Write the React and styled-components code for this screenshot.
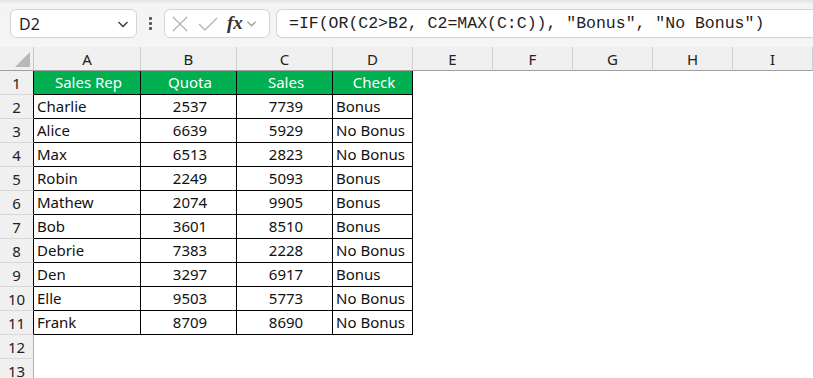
import React from "react";
import styled, { createGlobalStyle } from "styled-components";

const GlobalStyle = createGlobalStyle`
  html, body {
    margin: 0;
    padding: 0;
    background: #ffffff;
    overflow: hidden;
  }
  * {
    box-sizing: border-box;
  }
`;

const rows = [
  ["Charlie", 2537, 7739],
  ["Alice", 6639, 5929],
  ["Max", 6513, 2823],
  ["Robin", 2249, 5093],
  ["Mathew", 2074, 9905],
  ["Bob", 3601, 8510],
  ["Debrie", 7383, 2228],
  ["Den", 3297, 6917],
  ["Elle", 9503, 5773],
  ["Frank", 8709, 8690],
];

const letters = ["A", "B", "C", "D", "E", "F", "G", "H", "I"];

const Page = styled.div`
  width: 813px;
  height: 378px;
  overflow: hidden;
  font-family: "Noto Sans", "Liberation Sans", sans-serif;
`;

const Toolbar = styled.div`
  height: 47px;
  display: flex;
  align-items: flex-start;
  padding: 9px 0 0 10px;
  background: linear-gradient(#e4e4e4 0px, #f4f4f4 4px, #f5f5f5 100%);
`;

const Box = styled.div`
  height: 29px;
  background: #ffffff;
  border: 1px solid #d4d4d4;
  border-radius: 6px;
  display: flex;
  align-items: center;
`;

const NameBox = styled(Box)`
  width: 127px;
  padding: 0 7px 0 8px;
  justify-content: space-between;
  font-size: 16px;
  color: #1e1e1e;
`;

const Dots = styled.div`
  width: 27px;
  height: 29px;
  display: flex;
  flex-direction: column;
  align-items: center;
  justify-content: center;
  gap: 2px;
  span {
    width: 3px;
    height: 3px;
    background: #555;
    border-radius: 1px;
  }
`;

const FxBox = styled(Box)`
  width: 106px;
  padding: 0 4px 0 6px;
`;

const FxGlyph = styled.span`
  font-family: "Liberation Serif", "DejaVu Serif", serif;
  font-style: italic;
  font-weight: bold;
  font-size: 19px;
  color: #333;
  margin: 0 3px 2px 8px;
`;

const FormulaBox = styled(Box)`
  flex: 1;
  margin-left: 6px;
  border-right: none;
  border-radius: 6px 0 0 6px;
  padding-left: 12px;
  font-family: "Liberation Mono", "DejaVu Sans Mono", monospace;
  font-size: 16.5px;
  color: #1e1e1e;
  white-space: nowrap;
`;

const Grid = styled.div`
  display: grid;
  grid-template-columns: 34px 107px 96px 96px 80px 80px 80px 80px 80px 80px;
  grid-auto-rows: 24px;
`;

const Corner = styled.div`
  background: #f0f0f0;
  border-bottom: 1px solid #a0a0a0;
  border-right: 1px solid #c8c8c8;
  position: relative;
  &::after {
    content: "";
    position: absolute;
    right: 3px;
    bottom: 3px;
    width: 0;
    height: 0;
    border-left: 15px solid transparent;
    border-bottom: 15px solid #b8b8b8;
  }
`;

const ColHead = styled.div`
  background: #f0f0f0;
  border-bottom: 1px solid #a0a0a0;
  border-right: 1px solid #d0d0d0;
  display: flex;
  align-items: center;
  justify-content: center;
  font-size: 15px;
  color: #222;
`;

const RowHead = styled.div`
  background: #f0f0f0;
  border-bottom: 1px solid #d8d8d8;
  border-right: 1px solid ${(p) => (p.$edge ? "#000" : "#b0b0b0")};
  display: flex;
  align-items: center;
  justify-content: center;
  font-size: 15px;
  color: #222;
`;

const Cell = styled.div`
  border-right: 1px solid #000;
  border-bottom: 1px solid #000;
  background: ${(p) => (p.$head ? "#00b050" : "#ffffff")};
  color: ${(p) => (p.$head ? "#ffffff" : "#111")};
  display: flex;
  align-items: center;
  justify-content: ${(p) => (p.$align === "center" ? "center" : "flex-start")};
  padding: 0 0 1px 3px;
  font-size: 15px;
  white-space: nowrap;
`;

const Empty = styled.div`
  background: #ffffff;
`;

const Chevron = ({ color = "#333", size = 12 }) => (
  <svg width={size} height={size} viewBox="0 0 12 12">
    <path d="M1.5 4 L6 8.5 L10.5 4" fill="none" stroke={color} strokeWidth="1.3" />
  </svg>
);

const blanks = (n, prefix) =>
  Array.from({ length: n }).map((_, i) => <Empty key={prefix + i} />);

const App = () => {
  return (
    <Page>
      <GlobalStyle />
      <Toolbar>
        <NameBox>
          <span>D2</span>
          <Chevron />
        </NameBox>
        <Dots>
          <span />
          <span />
          <span />
        </Dots>
        <FxBox>
          <svg width="18" height="18" viewBox="0 0 18 18">
            <path d="M2 2 L16 16 M16 2 L2 16" stroke="#b4b4b4" strokeWidth="1.4" fill="none" />
          </svg>
          <svg width="22" height="18" viewBox="0 0 22 18" style={{ marginLeft: 8 }}>
            <path d="M2 9 L8 15 L20 3" stroke="#b4b4b4" strokeWidth="1.4" fill="none" />
          </svg>
          <FxGlyph>fx</FxGlyph>
          <Chevron color="#999" size={11} />
        </FxBox>
        <FormulaBox>=IF(OR(C2&gt;B2, C2=MAX(C:C)), "Bonus", "No Bonus")</FormulaBox>
      </Toolbar>
      <Grid>
        <Corner />
        {letters.map((l) => (
          <ColHead key={l}>{l}</ColHead>
        ))}
        <RowHead $edge>1</RowHead>
        <Cell $head $align="center">Sales Rep</Cell>
        <Cell $head $align="center">Quota</Cell>
        <Cell $head $align="center">Sales</Cell>
        <Cell $head $align="center">Check</Cell>
        {blanks(5, "h")}
        {rows.map(([name, quota, sales], idx) => (
          <React.Fragment key={name}>
            <RowHead $edge>{idx + 2}</RowHead>
            <Cell>{name}</Cell>
            <Cell $align="center">{quota}</Cell>
            <Cell $align="center">{sales}</Cell>
            <Cell>{sales > quota || sales === 9905 ? "Bonus" : "No Bonus"}</Cell>
            {blanks(5, "r")}
          </React.Fragment>
        ))}
        {[12, 13].map((n) => (
          <React.Fragment key={n}>
            <RowHead>{n}</RowHead>
            {blanks(9, "e")}
          </React.Fragment>
        ))}
      </Grid>
    </Page>
  );
};

export default App;
